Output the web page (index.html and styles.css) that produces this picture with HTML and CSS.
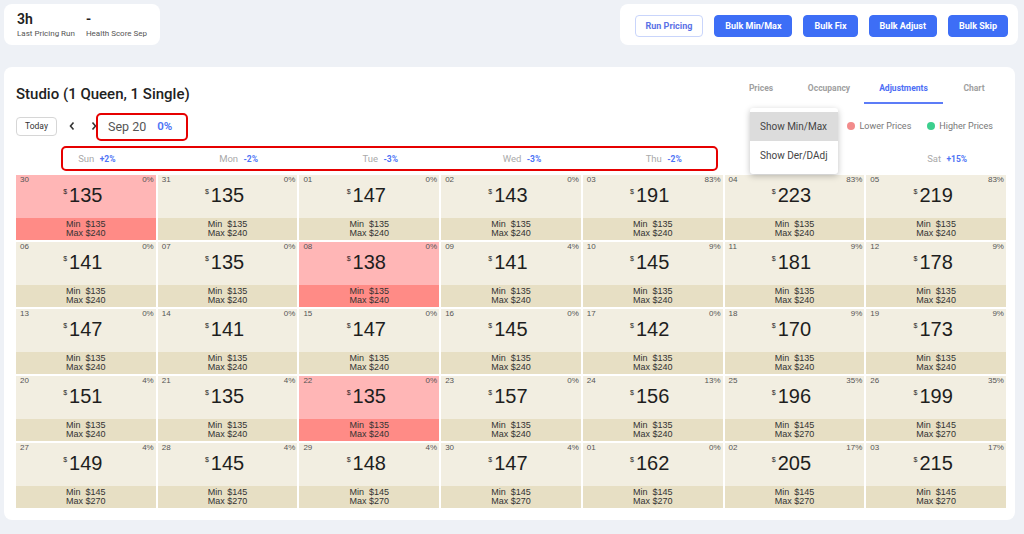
FILE: index.html
```html
<!DOCTYPE html>
<html lang="en">

<head>
    <meta charset="UTF-8">
    <meta name="viewport" content="width=device-width, initial-scale=1.0">
    <title>Pricing</title>
    <link rel="stylesheet" href="styles.css">
</head>

<body>
    <div class="topbar">
        <div class="stats">
            <div class="stat">
                <div class="stat-val">3h</div>
                <div class="stat-lbl">Last Pricing Run</div>
            </div>
            <div class="stat">
                <div class="stat-val">-</div>
                <div class="stat-lbl">Health Score Sep</div>
            </div>
        </div>
        <div class="actions">
            <button type="button" class="btn ghost">Run Pricing</button>
            <button type="button" class="btn">Bulk Min/Max</button>
            <button type="button" class="btn">Bulk Fix</button>
            <button type="button" class="btn">Bulk Adjust</button>
            <button type="button" class="btn">Bulk Skip</button>
        </div>
    </div>

    <div class="card">
        <div class="head-row">
            <h1 class="title">Studio (1 Queen, 1 Single)</h1>
            <div class="tabs">
                <span class="tab t-prices">Prices</span>
                <span class="tab t-occ">Occupancy</span>
                <span class="tab t-adj active">Adjustments</span>
                <span class="tab t-chart">Chart</span>
            </div>
        </div>

        <div class="ctrl-row">
            <div class="nav">
                <button type="button" class="today">Today</button>
                <svg class="chev" width="8" height="10" viewBox="0 0 8 10"><path d="M5.5 1.5 2.5 5l3 3.5" fill="none" stroke="#333" stroke-width="1.6"/></svg>
                <svg class="chev" width="8" height="10" viewBox="0 0 8 10"><path d="M2.5 1.5 5.5 5l-3 3.5" fill="none" stroke="#333" stroke-width="1.6"/></svg>
                <span class="month">Sep 20</span>
                <span class="month-pct">0%</span>
            </div>
            <div class="legend">
                <span class="dot lower"></span>Lower Prices
                <span class="dot higher"></span>Higher Prices
            </div>
        </div>

        <div class="weekdays">
            <div>Sun <b>+2%</b></div>
            <div>Mon <b>-2%</b></div>
            <div>Tue <b>-3%</b></div>
            <div>Wed <b>-3%</b></div>
            <div>Thu <b>-2%</b></div>
            <div></div>
            <div>Sat <b>+15%</b></div>
        </div>

        <div class="cal">
            <!-- week 1 -->
            <div class="day red"><div class="dh"><span>30</span><span>0%</span></div><div class="price"><sup>$</sup>135</div><div class="range">Min&nbsp; $135<br>Max $240</div></div>
            <div class="day"><div class="dh"><span>31</span><span>0%</span></div><div class="price"><sup>$</sup>135</div><div class="range">Min&nbsp; $135<br>Max $240</div></div>
            <div class="day"><div class="dh"><span>01</span><span>0%</span></div><div class="price"><sup>$</sup>147</div><div class="range">Min&nbsp; $135<br>Max $240</div></div>
            <div class="day"><div class="dh"><span>02</span><span>0%</span></div><div class="price"><sup>$</sup>143</div><div class="range">Min&nbsp; $135<br>Max $240</div></div>
            <div class="day"><div class="dh"><span>03</span><span>83%</span></div><div class="price"><sup>$</sup>191</div><div class="range">Min&nbsp; $135<br>Max $240</div></div>
            <div class="day"><div class="dh"><span>04</span><span>83%</span></div><div class="price"><sup>$</sup>223</div><div class="range">Min&nbsp; $135<br>Max $240</div></div>
            <div class="day"><div class="dh"><span>05</span><span>83%</span></div><div class="price"><sup>$</sup>219</div><div class="range">Min&nbsp; $135<br>Max $240</div></div>
            <!-- week 2 -->
            <div class="day"><div class="dh"><span>06</span><span>0%</span></div><div class="price"><sup>$</sup>141</div><div class="range">Min&nbsp; $135<br>Max $240</div></div>
            <div class="day"><div class="dh"><span>07</span><span>0%</span></div><div class="price"><sup>$</sup>135</div><div class="range">Min&nbsp; $135<br>Max $240</div></div>
            <div class="day red"><div class="dh"><span>08</span><span>0%</span></div><div class="price"><sup>$</sup>138</div><div class="range">Min&nbsp; $135<br>Max $240</div></div>
            <div class="day"><div class="dh"><span>09</span><span>4%</span></div><div class="price"><sup>$</sup>141</div><div class="range">Min&nbsp; $135<br>Max $240</div></div>
            <div class="day"><div class="dh"><span>10</span><span>9%</span></div><div class="price"><sup>$</sup>145</div><div class="range">Min&nbsp; $135<br>Max $240</div></div>
            <div class="day"><div class="dh"><span>11</span><span>9%</span></div><div class="price"><sup>$</sup>181</div><div class="range">Min&nbsp; $135<br>Max $240</div></div>
            <div class="day"><div class="dh"><span>12</span><span>9%</span></div><div class="price"><sup>$</sup>178</div><div class="range">Min&nbsp; $135<br>Max $240</div></div>
            <!-- week 3 -->
            <div class="day"><div class="dh"><span>13</span><span>0%</span></div><div class="price"><sup>$</sup>147</div><div class="range">Min&nbsp; $135<br>Max $240</div></div>
            <div class="day"><div class="dh"><span>14</span><span>0%</span></div><div class="price"><sup>$</sup>141</div><div class="range">Min&nbsp; $135<br>Max $240</div></div>
            <div class="day"><div class="dh"><span>15</span><span>0%</span></div><div class="price"><sup>$</sup>147</div><div class="range">Min&nbsp; $135<br>Max $240</div></div>
            <div class="day"><div class="dh"><span>16</span><span>0%</span></div><div class="price"><sup>$</sup>145</div><div class="range">Min&nbsp; $135<br>Max $240</div></div>
            <div class="day"><div class="dh"><span>17</span><span>0%</span></div><div class="price"><sup>$</sup>142</div><div class="range">Min&nbsp; $135<br>Max $240</div></div>
            <div class="day"><div class="dh"><span>18</span><span>9%</span></div><div class="price"><sup>$</sup>170</div><div class="range">Min&nbsp; $135<br>Max $240</div></div>
            <div class="day"><div class="dh"><span>19</span><span>9%</span></div><div class="price"><sup>$</sup>173</div><div class="range">Min&nbsp; $135<br>Max $240</div></div>
            <!-- week 4 -->
            <div class="day"><div class="dh"><span>20</span><span>4%</span></div><div class="price"><sup>$</sup>151</div><div class="range">Min&nbsp; $135<br>Max $240</div></div>
            <div class="day"><div class="dh"><span>21</span><span>4%</span></div><div class="price"><sup>$</sup>135</div><div class="range">Min&nbsp; $135<br>Max $240</div></div>
            <div class="day red"><div class="dh"><span>22</span><span>0%</span></div><div class="price"><sup>$</sup>135</div><div class="range">Min&nbsp; $135<br>Max $240</div></div>
            <div class="day"><div class="dh"><span>23</span><span>0%</span></div><div class="price"><sup>$</sup>157</div><div class="range">Min&nbsp; $135<br>Max $240</div></div>
            <div class="day"><div class="dh"><span>24</span><span>13%</span></div><div class="price"><sup>$</sup>156</div><div class="range">Min&nbsp; $135<br>Max $240</div></div>
            <div class="day"><div class="dh"><span>25</span><span>35%</span></div><div class="price"><sup>$</sup>196</div><div class="range">Min&nbsp; $145<br>Max $270</div></div>
            <div class="day"><div class="dh"><span>26</span><span>35%</span></div><div class="price"><sup>$</sup>199</div><div class="range">Min&nbsp; $145<br>Max $270</div></div>
            <!-- week 5 -->
            <div class="day"><div class="dh"><span>27</span><span>4%</span></div><div class="price"><sup>$</sup>149</div><div class="range">Min&nbsp; $145<br>Max $270</div></div>
            <div class="day"><div class="dh"><span>28</span><span>4%</span></div><div class="price"><sup>$</sup>145</div><div class="range">Min&nbsp; $145<br>Max $270</div></div>
            <div class="day"><div class="dh"><span>29</span><span>4%</span></div><div class="price"><sup>$</sup>148</div><div class="range">Min&nbsp; $145<br>Max $270</div></div>
            <div class="day"><div class="dh"><span>30</span><span>4%</span></div><div class="price"><sup>$</sup>147</div><div class="range">Min&nbsp; $145<br>Max $270</div></div>
            <div class="day"><div class="dh"><span>01</span><span>0%</span></div><div class="price"><sup>$</sup>162</div><div class="range">Min&nbsp; $145<br>Max $270</div></div>
            <div class="day"><div class="dh"><span>02</span><span>17%</span></div><div class="price"><sup>$</sup>205</div><div class="range">Min&nbsp; $145<br>Max $270</div></div>
            <div class="day"><div class="dh"><span>03</span><span>17%</span></div><div class="price"><sup>$</sup>215</div><div class="range">Min&nbsp; $145<br>Max $270</div></div>
        </div>

        <!-- open menu -->
        <div class="menu">
            <div class="menu-item sel">Show Min/Max</div>
            <div class="menu-item">Show Der/DAdj</div>
        </div>

        <!-- red marks -->
        <div class="mark mark-month"></div>
        <div class="mark mark-week"></div>
    </div>
</body>

</html>
```

FILE: styles.css
```css
body {
    margin: 0;
    background: #eef1f6;
    font-family: Roboto, "Noto Sans", sans-serif;
    color: #222;
}

.topbar {
    display: flex;
    justify-content: space-between;
    padding: 4px 6px 0 4px;
}

.stats {
    width: 156px;
    height: 41px;
    box-sizing: border-box;
    background: #fff;
    border-radius: 8px;
    display: flex;
    gap: 11px;
    padding: 7px 0 0 13px;
}

.stat-val {
    font-size: 14px;
    font-weight: 600;
    line-height: 16px;
    height: 18px;
}

.stat-lbl {
    font-size: 8px;
    color: #555;
    line-height: 10px;
}

.actions {
    width: 398px;
    height: 41px;
    box-sizing: border-box;
    background: #fff;
    border-radius: 8px;
    display: flex;
    align-items: center;
    justify-content: flex-end;
    gap: 11px;
    padding: 3px 10px 0;
}

.btn {
    flex-shrink: 0;
    white-space: nowrap;
    height: 22px;
    padding: 0 10px;
    border: 1px solid #3d6ef6;
    border-radius: 4px;
    background: #3d6ef6;
    color: #fff;
    font-family: Roboto, sans-serif;
    font-size: 9px;
    font-weight: 700;
    cursor: pointer;
}

.btn.ghost {
    background: #fff;
    border-color: #c9d5fb;
    color: #5a72e6;
}

.card {
    position: relative;
    margin: 22px 9px 0 4px;
    background: #fff;
    border-radius: 8px;
    padding: 11px 9px 12px 12px;
}

.head-row {
    display: flex;
    justify-content: space-between;
    align-items: flex-end;
}

.title {
    margin: 0 0 1px 0;
    font-size: 15px;
    font-weight: 500;
    line-height: 18px;
    color: #222;
}

.tabs {
    display: flex;
    margin-right: 1px;
}

.tab {
    padding-bottom: 4px;
    text-align: center;
    font-size: 8.5px;
    font-weight: 700;
    line-height: 20px;
    color: #a0a0a0;
    border-bottom: 2px solid transparent;
}

.t-prices { width: 66px; }
.t-occ { width: 70px; }
.t-adj { width: 79px; }
.t-chart { width: 62px; }

.tab.active {
    color: #4d6ef5;
    border-bottom-color: #5c7cf7;
}

.ctrl-row {
    display: flex;
    justify-content: space-between;
    align-items: center;
    margin-top: 13px;
    height: 18px;
}

.nav {
    display: flex;
    align-items: center;
}

.today {
    width: 41px;
    height: 19px;
    border: 1px solid #d6d6d6;
    border-radius: 4px;
    background: #fff;
    font-family: Roboto, sans-serif;
    font-size: 8.5px;
    color: #333;
    padding: 0;
    margin-right: 11px;
}

.chev {
    margin-right: 14px;
}

.month {
    font-size: 12.5px;
    color: #555;
    margin-left: -4px;
}

.month-pct {
    font-size: 11.5px;
    font-weight: 600;
    color: #4d73f5;
    margin-left: 11px;
}

.legend {
    display: flex;
    align-items: center;
    font-size: 9px;
    color: #777;
    margin-right: 13px;
}

.dot {
    width: 8px;
    height: 8px;
    border-radius: 50%;
    margin-right: 4px;
}

.dot.lower {
    background: #f28b8b;
}

.dot.higher {
    background: #3ccf8e;
    margin-left: 16px;
}

.weekdays {
    display: grid;
    grid-template-columns: repeat(7, 1fr);
    gap: 2px;
    margin-top: 15px;
    height: 18px;
    line-height: 18px;
    font-size: 9.5px;
    color: #aaa;
}

.weekdays div {
    text-align: center;
    padding-left: 22px;
}

.weekdays b {
    font-size: 8.5px;
    color: #4d73f5;
    margin-left: 3px;
}

.cal {
    display: grid;
    grid-template-columns: repeat(7, 1fr);
    gap: 2px;
    margin-top: 7px;
    font-family: "Liberation Sans", Arial, sans-serif;
}

.day {
    height: 65px;
    display: flex;
    flex-direction: column;
    background: #f2eee1;
}

.dh {
    display: flex;
    justify-content: space-between;
    height: 10px;
    padding: 0 2px 0 4px;
    font-size: 8px;
    line-height: 10px;
    color: #555;
}

.price {
    height: 33px;
    font-size: 20px;
    line-height: 14px;
    text-align: center;
    color: #1e1e1e;
    padding-right: 6px;
    box-sizing: border-box;
}

.price sup {
    font-size: 7px;
    vertical-align: 8px;
    margin-right: 2px;
}

.range {
    height: 22px;
    background: #e7dfc4;
    font-size: 9px;
    line-height: 9.5px;
    padding-top: 1.5px;
    box-sizing: border-box;
    text-align: center;
    color: #333;
}

.day.red {
    background: #ffb6b6;
}

.day.red .range {
    background: #ff8b86;
}

.menu {
    position: absolute;
    left: 746px;
    top: 41px;
    width: 88px;
    padding: 4px 0;
    background: #fff;
    border-radius: 3px;
    box-shadow: 0 2px 6px rgba(0, 0, 0, 0.25);
}

.menu-item {
    height: 29px;
    line-height: 29px;
    padding-left: 10px;
    font-size: 10px;
    color: #444;
}

.menu-item.sel {
    background: #dcdcdc;
}

.mark {
    position: absolute;
    border: 2.5px solid #e60000;
    border-radius: 5px;
    box-sizing: border-box;
}

.mark-month {
    left: 92px;
    top: 46px;
    width: 92px;
    height: 28px;
}

.mark-week {
    left: 57px;
    top: 79px;
    width: 657px;
    height: 25px;
}
```
